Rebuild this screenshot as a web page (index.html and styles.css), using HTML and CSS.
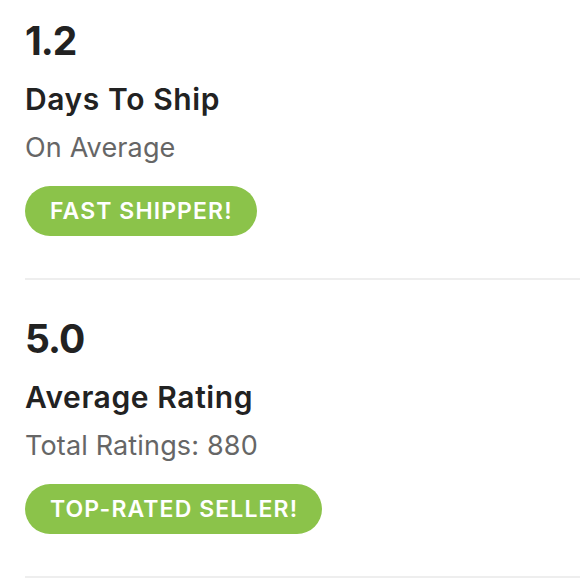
FILE: index.html
```html
<!DOCTYPE html>
<html>
<head>
<meta charset="utf-8">
<link rel="stylesheet" href="styles.css">
</head>
<body>
<div class="stats">
  <section class="stat">
    <div class="value">1.2</div>
    <div class="label">Days To Ship</div>
    <div class="sub">On Average</div>
    <div class="badge">FAST SHIPPER!</div>
  </section>
  <section class="stat">
    <div class="value">5.0</div>
    <div class="label">Average Rating</div>
    <div class="sub">Total Ratings: 880</div>
    <div class="badge">TOP-RATED SELLER!</div>
  </section>
</div>
</body>
</html>
```
FILE: styles.css
```css
html, body {
  margin: 0;
  padding: 0;
  background: #fff;
}
body {
  font-family: "Inter", "Liberation Sans", sans-serif;
  color: #222;
}
.stats {
  padding-left: 25px;
}
.stat {
  display: flex;
  flex-direction: column;
  align-items: flex-start;
  padding: 39px 0 42px;
  border-bottom: 2px solid #eeeeee;
}
.stat:first-child {
  padding-top: 21px;
}
.value {
  font-size: 39px;
  font-weight: 700;
  line-height: 39px;
  letter-spacing: -1px;
}
.label {
  font-size: 30px;
  font-weight: 600;
  line-height: 30px;
  margin-top: 24px;
  letter-spacing: 0.6px;
}
.sub {
  font-size: 27px;
  font-weight: 400;
  color: #666;
  line-height: 27px;
  margin-top: 20px;
  letter-spacing: 0.15px;
}
.badge {
  margin-top: 25px;
  background: #8bc34a;
  color: #fff;
  font-size: 23px;
  font-weight: 600;
  height: 50px;
  line-height: 50px;
  padding: 0 24px 0 25px;
  border-radius: 25px;
  letter-spacing: 1.1px;
}
```
